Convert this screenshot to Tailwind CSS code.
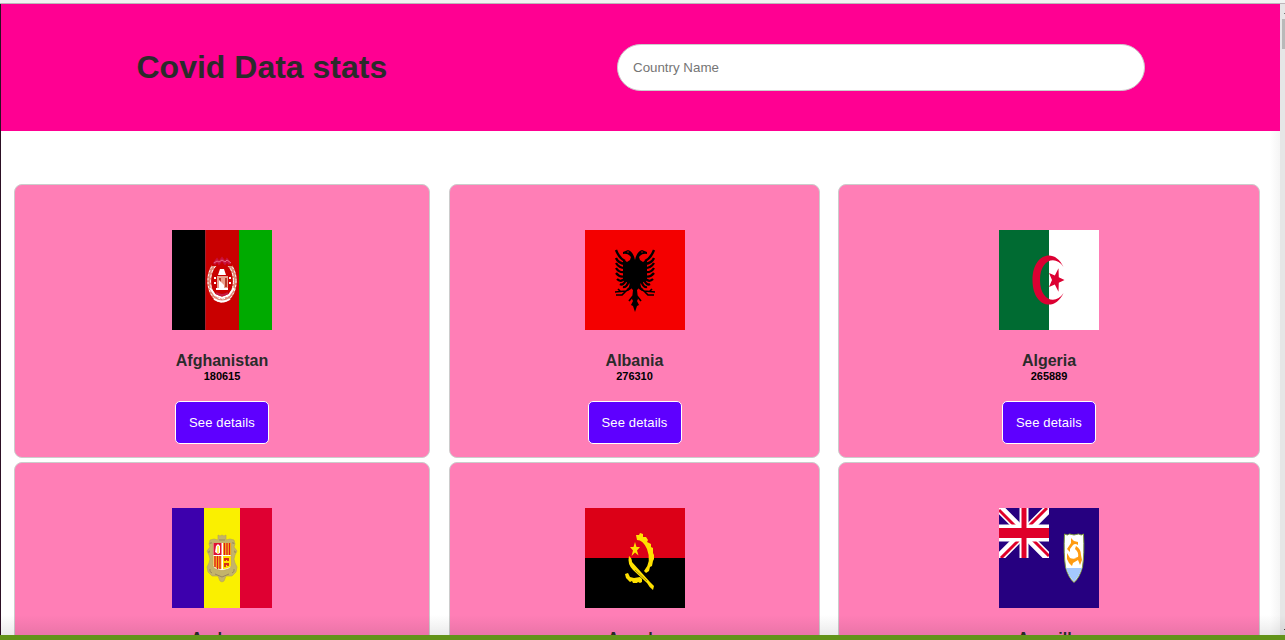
<!DOCTYPE html>
<html lang="en">
<head>
<meta charset="utf-8">
<title>Covid Data stats</title>
<script src="https://cdn.jsdelivr.net/npm/@tailwindcss/browser@4"></script>
</head>
<body class="w-[1285px] h-[640px] overflow-hidden bg-white font-['Liberation_Sans',Arial,sans-serif] relative flex flex-col">
<div class="h-[4px] shrink-0 bg-[#f2f2f2] border-b border-[#bdb5ba]"></div>
<div class="flex h-[631px] shrink-0">
  <div class="w-px shrink-0 bg-[#2c0f24]"></div>
  <main class="w-[1279px] h-full overflow-hidden">
    <header class="h-[127px] bg-[#ff0092] flex items-center pl-[135.5px]">
      <h1 class="w-[480.5px] pb-[1px] text-[32px] leading-[36px] font-bold text-[#2b2b2b]">Covid Data stats</h1>
      <input type="text" placeholder="Country Name" class="w-[528px] h-[47px] rounded-full bg-white border border-[#cccccc] px-[15px] text-[13.333px] placeholder:text-[#757575]">
    </header>
    <section class="mt-[53px] ml-[13px] grid grid-cols-[416px_371px_422px] gap-y-1 auto-rows-[274px]">
      <article class="rounded-lg border border-[#cccccc] bg-[#ff7eb6] flex flex-col items-center pt-[45px]">
        <svg class="w-[100px] h-[100px]" viewBox="0 0 100 100">
          <path fill="#000" d="M0 0h33.500v100H0z"/><path fill="#c90000" d="M33.500 0h33.500v100H33.500z"/><path fill="#00aa00" d="M67 0h33v100H67z"/>
          <ellipse cx="50" cy="51" rx="12.800" ry="19.500" fill="none" stroke="#e08a78" stroke-width="4"/>
          <ellipse cx="50" cy="51" rx="14" ry="21" fill="none" stroke="#fff" stroke-width="1" stroke-dasharray="2 2"/>
          <ellipse cx="50" cy="51" rx="11.500" ry="18" fill="none" stroke="#fff" stroke-width="1" stroke-dasharray="3 2"/>
          <path fill="#c90000" d="M40 26h20v10H40z"/>
          <path d="M42 34l3-4 2 3 3-4 3 4 2-3 3 4" fill="none" stroke="#c8103c" stroke-width="3"/>
          <path d="M42 33l3-2 2 1 3-2 3 2 2-2 4 3" fill="none" stroke="#e56b82" stroke-width="1"/>
          <path fill="#fff" d="M48 39h4l2 6h-8zM44 58h12v2H44zM42 47h2v2h-2zM57 47h2v2h-2zM42 52h2v2h-2zM57 52h2v2h-2z"/>
          <path fill="#e9a08c" d="M45 46h11v12H45z"/><path fill="#b73b28" d="M47 48h2v4h-2zM53 48h2v9h-2z"/><path fill="#fff" d="M47 50l5 5v3h-5z"/>
          <path fill="none" stroke="#fff" stroke-width="2" d="M38 58l5 7 7 3 7-3 5-7M42 69q8 5 16 0"/><path fill="none" stroke="#c51b45" stroke-width="2" d="M44 63q6 4 12 0"/>
        </svg>
        <h2 class="mt-[22px] text-[16px] leading-[18px] font-bold text-[#2b2b2b]">Afghanistan</h2>
        <p class="text-[11px] leading-[13px] font-bold text-black">180615</p>
        <button class="mt-[18px] w-[94px] h-[43px] rounded-[5px] border border-white bg-[#5e00ff] text-white text-[13px] tracking-[0.15px]">See details</button>
      </article>
      <article class="ml-[19px] -mr-[19px] rounded-lg border border-[#cccccc] bg-[#ff7eb6] flex flex-col items-center pt-[45px]">
        <svg class="w-[100px] h-[100px]" viewBox="0 0 100 100">
          <path fill="#f40000" d="M0 0h100v100H0z"/>
          <path d="M50 30Q48 21 43 20L38 22 38 24Q43 23 46 27L45 30 42 32 38 29V50L43 53 46 54 45 57 48 60 47 69 48 71 46 75 48 76 50 82 52 76 54 75 52 71 53 69 52 60 55 57 54 54 57 53 62 50V29L58 32 55 30 54 27Q57 23 62 24L62 22 57 20Q52 21 50 30Z"/>
          <path fill="none" stroke="#000" stroke-width="2.300" d="M40 31Q34 28 31 20M40 34Q33 33 31 28M40 38Q34 38 31 33M40 42Q34 43 31 38M40 46Q35 48 31 43M40 48Q36 53 32 49M41 50Q38 56 35 54M44 50Q42 58 38 57M46 51Q46 59 42 60"/>
          <path fill="none" stroke="#000" stroke-width="2.300" d="M60 31Q66 28 69 20M60 34Q67 33 69 28M60 38Q66 38 69 33M60 42Q66 43 69 38M60 46Q65 48 69 43M60 48Q64 53 68 49M59 50Q62 56 65 54M56 50Q58 58 62 57M54 51Q54 59 58 60"/>
          <path fill="none" stroke="#000" stroke-width="1.700" d="M46 58L41 61 30 62M41 61L37 65 31 65M36 62L33 59M54 58L59 61 70 62M59 61L63 65 69 65M64 62L67 59M48 66L44 71M52 66L56 71"/>
          <circle cx="43" cy="22" r=".8" fill="#d00000"/><circle cx="57" cy="22" r=".8" fill="#d00000"/>
        </svg>
        <h2 class="mt-[22px] text-[16px] leading-[18px] font-bold text-[#2b2b2b]">Albania</h2>
        <p class="text-[11px] leading-[13px] font-bold text-black">276310</p>
        <button class="mt-[18px] w-[94px] h-[43px] rounded-[5px] border border-white bg-[#5e00ff] text-white text-[13px] tracking-[0.15px]">See details</button>
      </article>
      <article class="ml-[37px] -mr-[37px] rounded-lg border border-[#cccccc] bg-[#ff7eb6] flex flex-col items-center pt-[45px]">
        <svg class="w-[100px] h-[100px]" viewBox="0 0 100 100">
          <path fill="#006b32" d="M0 0h50v100H0z"/><path fill="#fff" d="M50 0h50v100H50z"/>
          <path fill="#dc0032" d="M64.500 37C56 17.500 33.500 23 33.500 50S56 82.500 64.500 63C57 75 41 71 41 50S57 25 64.500 37ZM65.500 50l-5.700 2.800-.3 9-3.700-7.300-5.800 2.600 3-7.100-3-7.100 5.800 2.600 3.700-7.300.3 9z"/>
        </svg>
        <h2 class="mt-[22px] text-[16px] leading-[18px] font-bold text-[#2b2b2b]">Algeria</h2>
        <p class="text-[11px] leading-[13px] font-bold text-black">265889</p>
        <button class="mt-[18px] w-[94px] h-[43px] rounded-[5px] border border-white bg-[#5e00ff] text-white text-[13px] tracking-[0.15px]">See details</button>
      </article>
      <article class="rounded-lg border border-[#cccccc] bg-[#ff7eb6] flex flex-col items-center pt-[45px]">
        <svg class="w-[100px] h-[100px]" viewBox="0 0 100 100">
          <path fill="#3d00ad" d="M0 0h32v100H0z"/><path fill="#faf000" d="M32 0h36v100H32z"/><path fill="#df0032" d="M68 0h32v100H68z"/>
          <path fill="#c3b36b" stroke="#b3a35b" stroke-width=".6" d="M46 27l2 1 2-1 2 1 2-1 0 5 4-1 4 1 1 4-1 3 3 4-2 4-1 4 1 4 2 4-1 5-4 4-6 0-2 5-2 1-2-1-2-5-6 0-4-4-1-5 2-4 1-4-1-4-2-4 3-4-1-3 1-4 4-1 4 1z"/>
          <path fill="none" stroke="#99895d" d="M40 35q-2-1-2 1M38 43q-2 0-1 2M38 61q-1 3 2 4M60 35q2-1 2 1M62 43q2 0 1 2M62 61q1 3-2 4M43 66l7 3 7-3M47 32h6"/>
          <path fill="#fff" stroke="#c1a55b" stroke-width=".8" d="M41 34.500h18v23q0 4-9 5-9-1-9-5z"/>
          <path fill="#df1032" d="M41.500 35h8v12h-8z"/><path fill="#fff" d="M44 38l2-2 2 2v7l-2 1-3-2z"/><path fill="#ffec60" d="M45 38h2v7h-2z"/>
          <path fill="#f5bd20" d="M51 35h8v12h-8zM41.500 48h8v13q-8-1-8-4z"/><path stroke="#df1b1b" stroke-width="1.300" d="M52.500 35v12M55 35v12M57.500 35v12M43 48v11M45.500 48v13M48 48v13"/>
          <path fill="#ffe000" d="M51 48h8v9q0 3-8 4z"/><path fill="none" stroke="#d52c18" stroke-width="1.800" d="M52 51h5M53 50v3M56 51v2M52 56h5M53 56v3M56 56v2"/>
        </svg>
        <h2 class="mt-[22px] text-[16px] leading-[18px] font-bold text-[#2b2b2b]">Andorra</h2>
      </article>
      <article class="ml-[19px] -mr-[19px] rounded-lg border border-[#cccccc] bg-[#ff7eb6] flex flex-col items-center pt-[45px]">
        <svg class="w-[100px] h-[100px]" viewBox="0 0 100 100">
          <path fill="#dc0017" d="M0 0h100v50H0z"/><path fill="#000" d="M0 50h100v50H0z"/>
          <g fill="#ffe100"><path d="M50 34l1.500 5h3.500l-3 3.500 1.500 5L50 44.500 46.500 48l1.500-5.500-3-3.500h3.500z"/>
          <path d="M51 27l3 0 1-2 3 1v3l3 0 2 3-1 2 4 2 0 3 2 1 0 5 1 2 0 4-1 2-1 5-2 1-1 4-3 2-2-2Q67 54 62 41 58 32 52 32z"/>
          <path d="M40 66l3-1 2 4 4 1 6-1 2 2 0 3-2 1-2-1-1 1h-4l-1-2-2 1-3-3-1-1z"/>
          <path d="M44 48Q47 50 47 54L65 74 69 78 68 82Q64 79 62 75L48 62Q42 56 44 48z"/></g>
          <path stroke="#8f7a00" stroke-width=".8" d="M50 62l12 11"/>
        </svg>
        <h2 class="mt-[22px] text-[16px] leading-[18px] font-bold text-[#2b2b2b]">Angola</h2>
      </article>
      <article class="ml-[37px] -mr-[37px] rounded-lg border border-[#cccccc] bg-[#ff7eb6] flex flex-col items-center pt-[45px]">
        <svg class="w-[100px] h-[100px]" viewBox="0 0 100 100">
          <path fill="#260080" d="M0 0h100v100H0z"/>
          <svg width="50" height="50" viewBox="0 0 50 50"><path stroke="#fff" stroke-width="9" d="M0 0l50 50M50 0L0 50"/><path stroke="#df0029" stroke-width="3" d="M0 2l20 20M50 48L30 28M48 0L28 20M2 50l20-20"/><path stroke="#fff" stroke-width="9" d="M25 0v50"/><path stroke="#fff" stroke-width="17" d="M0 25h50"/><path stroke="#df0029" stroke-width="5" d="M25 0v50"/><path stroke="#df0029" stroke-width="10" d="M0 25h50"/></svg>
          <path fill="#fff" stroke="#7f9a42" stroke-width="1" d="M65.500 26q3 2 5 0l4.500 1 4.500-1q3 2 5 0 1 20-1 33-3 11-8.500 15.500-5.500-4.500-8.500-15.500-2-13-1-33z"/>
          <path fill="#a4c8ff" d="M67 60h16q-3 9-8 13.500-5-4.500-8-13.500z"/>
          <g fill="#ff9b12"><path d="M72 30l3 3 4 1v3q-3-2-5 0l-3 4 0 3-3-3 4-6z"/><path d="M77 38q5 3 5 9l1 5-2 5-2-5-3-2 3-1q1-5-3-8z"/><path d="M68 45l3 5q4 2 9-1l-1 3-5 3-1 3-3-3-2-4z"/></g>
        </svg>
        <h2 class="mt-[22px] text-[16px] leading-[18px] font-bold text-[#2b2b2b]">Anguilla</h2>
      </article>
    </section>
  </main>
  <aside class="w-[5px] shrink-0 bg-[#e6e6e6] flex flex-col items-end pt-[9px]">
    <span class="w-px h-px bg-[#777777]"></span>
    <span class="mt-[5px] w-[3px] h-[30px] bg-[#b9b9b9]"></span>
    <span class="mt-[580px] w-px h-px bg-[#444444]"></span>
  </aside>
</div>
<div class="absolute left-px top-[615px] w-[1284px] h-[20px] bg-linear-to-b from-black/0 to-black/8"></div>
<div class="absolute left-[1270px] top-[131px] w-[10px] h-[504px] bg-linear-to-r from-black/0 to-black/4"></div>
<footer class="h-[5px] shrink-0 bg-[#639319]"></footer>
</body>
</html>
